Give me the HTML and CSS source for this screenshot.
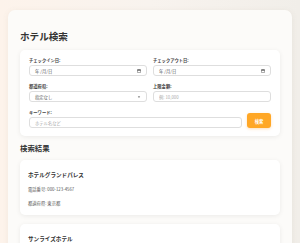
FILE: index.html
```html
<!DOCTYPE html>
<html lang="ja">
<head>
    <meta charset="UTF-8">
    <meta name="viewport" content="width=device-width, initial-scale=1.0">
    <title>ホテル検索</title>
    <link rel="stylesheet" href="styles.css">
</head>
<body>
    <div class="page">
        <main class="container">
            <h1>ホテル検索</h1>

            <form class="search-form">
                <div class="grid">
                    <div class="field">
                        <label>チェックイン日:</label>
                        <div class="box">
                            <span>年 /月/日</span>
                            <svg class="cal" viewBox="0 0 10 10"><rect x="1" y="1.5" width="8" height="7.5" rx="1" fill="none" stroke="#444" stroke-width="1.2"/><rect x="1" y="1.5" width="8" height="2.5" fill="#444"/></svg>
                        </div>
                    </div>
                    <div class="field">
                        <label>チェックアウト日:</label>
                        <div class="box">
                            <span>年 /月/日</span>
                            <svg class="cal" viewBox="0 0 10 10"><rect x="1" y="1.5" width="8" height="7.5" rx="1" fill="none" stroke="#444" stroke-width="1.2"/><rect x="1" y="1.5" width="8" height="2.5" fill="#444"/></svg>
                        </div>
                    </div>
                    <div class="field">
                        <label>都道府県:</label>
                        <div class="box">
                            <span>指定なし</span>
                            <svg class="arrow" viewBox="0 0 10 10"><path d="M2 3.5 L5 7 L8 3.5 Z" fill="#444"/></svg>
                        </div>
                    </div>
                    <div class="field">
                        <label>上限金額:</label>
                        <input type="text" placeholder="例: 10,000">
                    </div>
                </div>
                <div class="keyword-row">
                    <div class="field grow">
                        <label>キーワード:</label>
                        <input type="text" placeholder="ホテル名など">
                    </div>
                    <button type="submit">検索</button>
                </div>
            </form>

            <h2>検索結果</h2>

            <div class="result">
                <h3>ホテルグランドパレス</h3>
                <p>電話番号: 000-123-4567</p>
                <p>都道府県: 東京都</p>
            </div>
            <div class="result">
                <h3>サンライズホテル</h3>
                <p>電話番号: 000-987-6543</p>
                <p>都道府県: 大阪府</p>
            </div>
        </main>
    </div>
</body>
</html>
```

FILE: styles.css
```css
/* Basic Styles */
body {
    font-family: 'Noto Sans CJK JP', 'Noto Sans', sans-serif;
    background: linear-gradient(90deg, #fdf3eb 0%, #f8f3ee 50%, #f1eee9 100%);
    color: #333;
    margin: 0;
    padding: 0;
}

.page {
    padding: 10px 8px 0 8px;
}

.container {
    background-color: #fcfbf9;
    border-radius: 7px;
    padding: 20px 12px 10px 12px;
    box-shadow: 0 1px 6px rgba(120, 100, 80, 0.08);
}

/* Headings */
h1 {
    font-size: 9.6px;
    line-height: 12px;
    margin: 0 0 8px 0;
    font-weight: 700;
}

h2 {
    font-size: 7.4px;
    line-height: 9px;
    margin: 7px 0 8px 0;
    font-weight: 700;
}

/* Form */
.search-form {
    background-color: #fff;
    border-radius: 5px;
    padding: 7px 9px 8px 9px;
    box-shadow: 0 1px 5px rgba(0, 0, 0, 0.07);
}

.grid {
    display: grid;
    grid-template-columns: 1fr 1fr;
    column-gap: 6px;
    row-gap: 7px;
}

.field {
    display: flex;
    flex-direction: column;
}

.field label {
    font-size: 4.3px;
    line-height: 6px;
    font-weight: 700;
    color: #444;
    margin-bottom: 2px;
}

.box,
.field input {
    box-sizing: border-box;
    height: 11px;
    border: 0.6px solid #dedede;
    border-radius: 3px;
    background-color: #fff;
    font-family: inherit;
    font-size: 4.3px;
    color: #555;
    padding: 0 5px;
}

.box {
    display: flex;
    align-items: center;
    justify-content: space-between;
}

.field input {
    outline: none;
    width: 100%;
}

.field input::placeholder {
    color: #aaa;
}

.cal,
.arrow {
    width: 4px;
    height: 4px;
}

.keyword-row {
    display: flex;
    align-items: flex-end;
    gap: 5px;
    margin-top: 7px;
}

.grow {
    flex: 1;
}

.keyword-row button {
    width: 24px;
    height: 15px;
    border: none;
    border-radius: 3px;
    background-color: #ffa726;
    color: #fff;
    font-family: inherit;
    font-size: 4.3px;
    font-weight: 700;
    padding: 0;
    box-shadow: 0 1px 3px rgba(255, 150, 30, 0.3);
}

/* Results */
.result {
    background-color: #fff;
    border-radius: 5px;
    padding: 12px 8px 9px 8px;
    margin-bottom: 9px;
    box-shadow: 0 1px 5px rgba(0, 0, 0, 0.07);
}

.result h3 {
    font-size: 5.6px;
    line-height: 7px;
    margin: 0 0 7px 0;
    font-weight: 700;
}

.result p {
    font-size: 4.3px;
    line-height: 6px;
    margin: 0 0 8px 0;
    color: #555;
}

.result p:last-child {
    margin-bottom: 0;
}
```
